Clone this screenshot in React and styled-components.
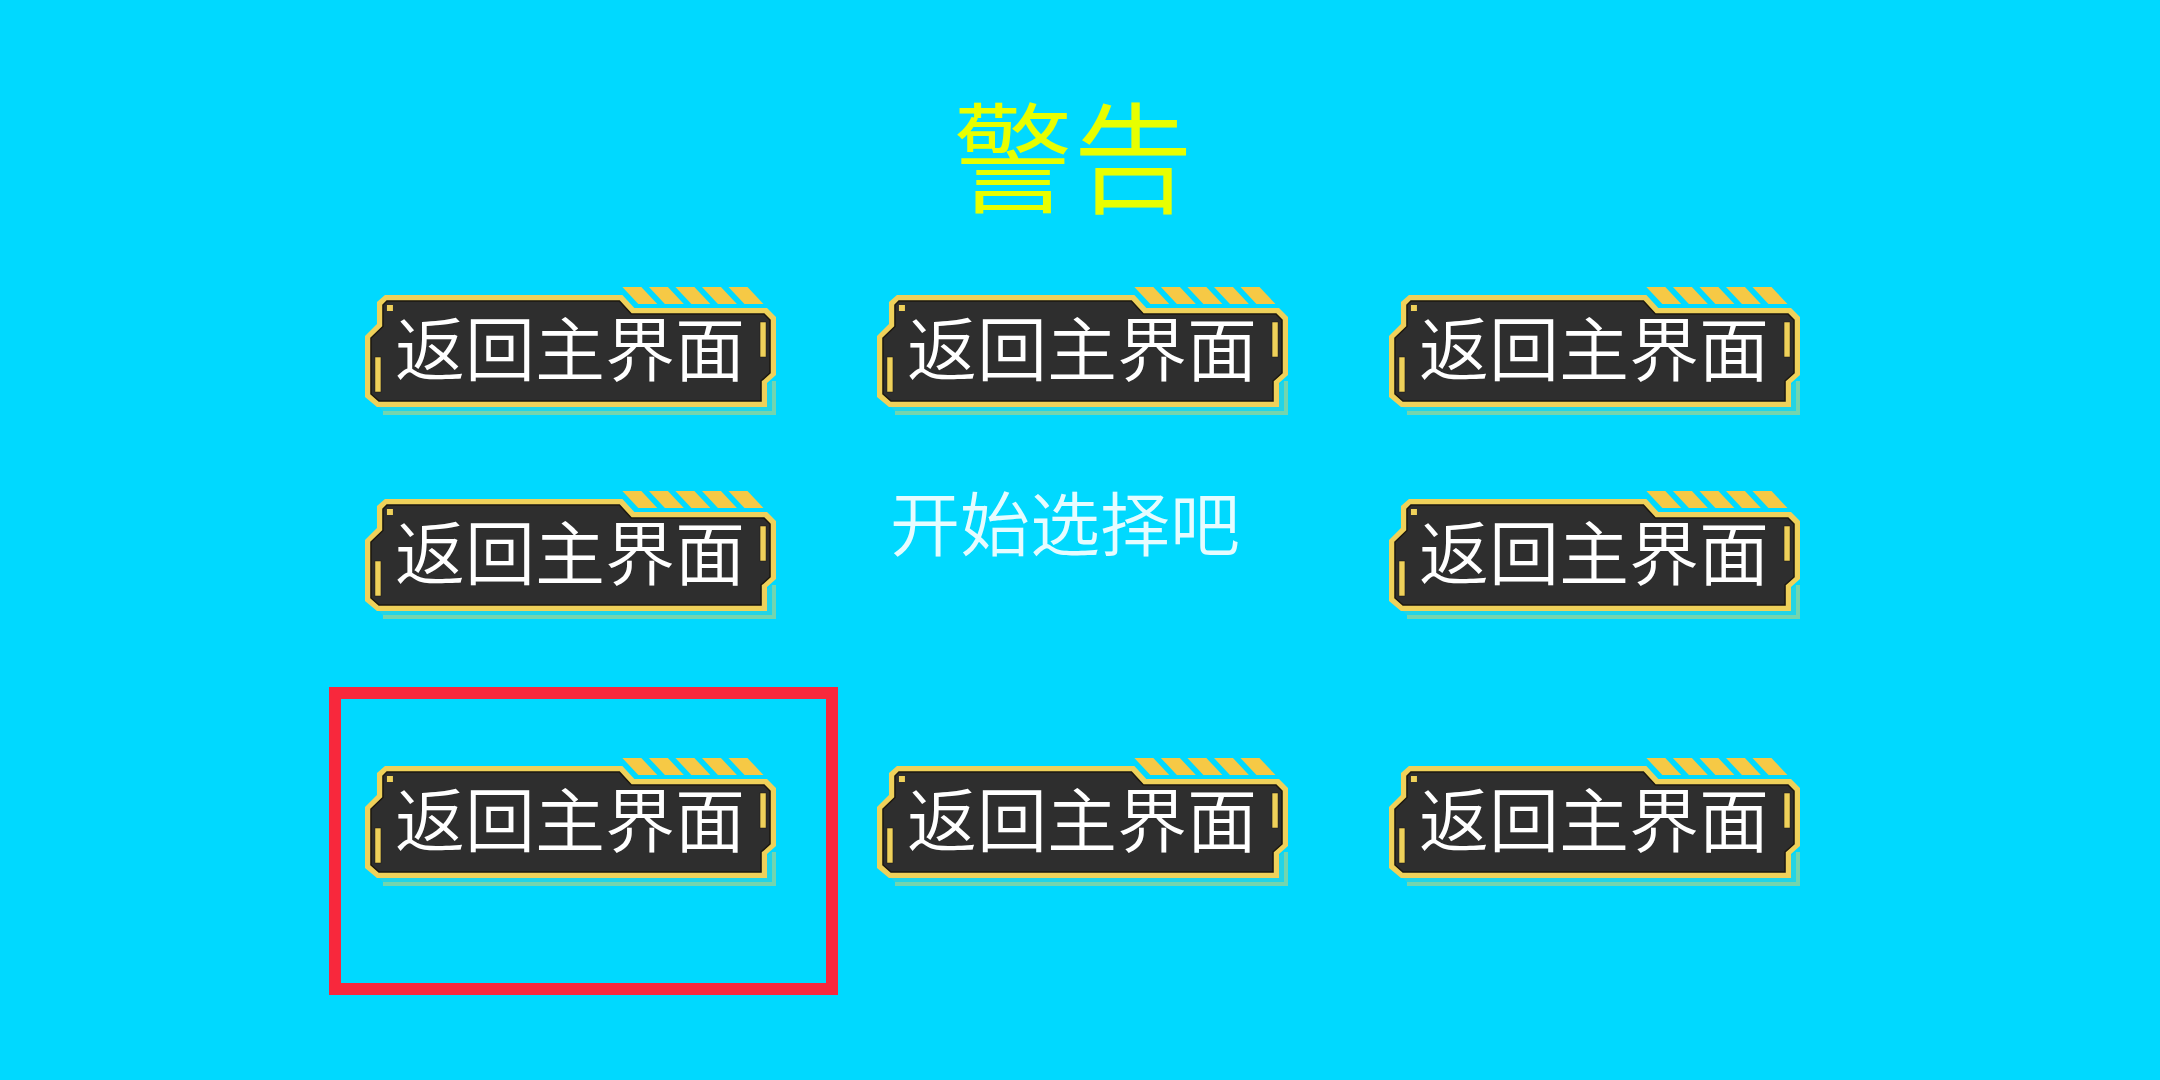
import React, { useState } from 'react';
import styled, { createGlobalStyle } from 'styled-components';

const GlobalStyle = createGlobalStyle`
    body {
        margin: 0;
        background: #00d9ff;
        font-family: "Noto Sans CJK SC", "Noto Sans", sans-serif;
        font-weight: 350;
    }
`;

const Page = styled.main`
    min-height: 100vh;
    box-sizing: border-box;
    padding: 92px 0 80px 4px;
    display: flex;
    flex-direction: column;
    align-items: center;
`;

const Title = styled.h1`
    margin: 0 0 75px;
    padding-right: 18px;
    font-size: 120px;
    font-weight: 350;
    line-height: 120px;
    color: #e8ff00;
`;

const Board = styled.div`
    width: 100%;
    max-width: 1536px;
    display: grid;
    grid-template-columns: repeat(3, minmax(0, 1fr));
    grid-template-rows: 204px 267px auto;
    justify-items: center;
    align-items: start;
`;

const Hint = styled.p`
    margin: 0;
    padding-right: 34px;
    font-size: 70px;
    line-height: 60px;
    color: #e6fcff;
    white-space: nowrap;
`;

const PlateButton = styled.button`
    position: relative;
    box-sizing: border-box;
    width: 411px;
    height: 128px;
    padding: 0 0 10px;
    border: none;
    background: none;
    font: inherit;
    font-size: 70px;
    line-height: 118px;
    color: #fff;
    white-space: nowrap;
    cursor: pointer;

    &:focus {
        outline: none;
    }

    /* selection frame around the active plate */
    &::after {
        content: "";
        display: ${props => props.$selected ? 'block' : 'none'};
        position: absolute;
        inset: -71px -62px -109px -36px;
        border: 12px solid #f8283c;
        pointer-events: none;
    }
`;

const PlateArt = styled.svg`
    position: absolute;
    inset: 0;
    width: 100%;
    height: 100%;
`;

const Label = styled.span`
    position: relative;
`;

const stripes = [258, 284.6, 311.2, 337.8, 364.4];

const Plate = () => (
    <PlateArt viewBox="0 0 412 128" preserveAspectRatio="none" aria-hidden="true">
        <path d="M14 120 H403 V98 L408 94 V124 H18 Z" fill="#22d4e6" />
        <path d="M18 126 H410 V94" fill="none" stroke="#74d5ae" strokeWidth="4" />
        {stripes.map(x => (
            <path key={x} d={`M${x} 0 h19 l16 17 h-19 Z`} fill="#f6c945" />
        ))}
        <path
            d="M20 8 H258 L270 21 H403 L412 30 V88 L403 96 V120 H12 L0 110 V49 L12 37 V15 Z"
            fill="#efd15a"
        />
        <path
            d="M22 14 H255 L267 27 H400 L406 33 V86 L397 94 V114 H14 L6 107 V51 L18 39.500 V18 Z"
            fill="#2e2e2e"
            stroke="#1b1710"
            strokeWidth="1.5"
        />
        <rect x="22" y="18" width="6" height="6" fill="#efd15a" />
        <rect x="10" y="70" width="6" height="35" fill="#efd15a" stroke="#1b1710" strokeWidth="0.5" />
        <rect x="396" y="35" width="6" height="35" fill="#efd15a" stroke="#1b1710" strokeWidth="0.5" />
    </PlateArt>
);

const cells = ['nw', 'n', 'ne', 'w', 'hint', 'e', 'sw', 's', 'se'];

export default function App() {
    const [selected, setSelected] = useState('sw');

    return (
        <Page>
            <GlobalStyle />
            <Title>警告</Title>
            <Board>
                {cells.map(cell => cell === 'hint' ? (
                    <Hint key={cell}>开始选择吧</Hint>
                ) : (
                    <PlateButton
                        key={cell}
                        type="button"
                        $selected={selected === cell}
                        onClick={() => setSelected(cell)}
                    >
                        <Plate />
                        <Label>返回主界面</Label>
                    </PlateButton>
                ))}
            </Board>
        </Page>
    );
}
